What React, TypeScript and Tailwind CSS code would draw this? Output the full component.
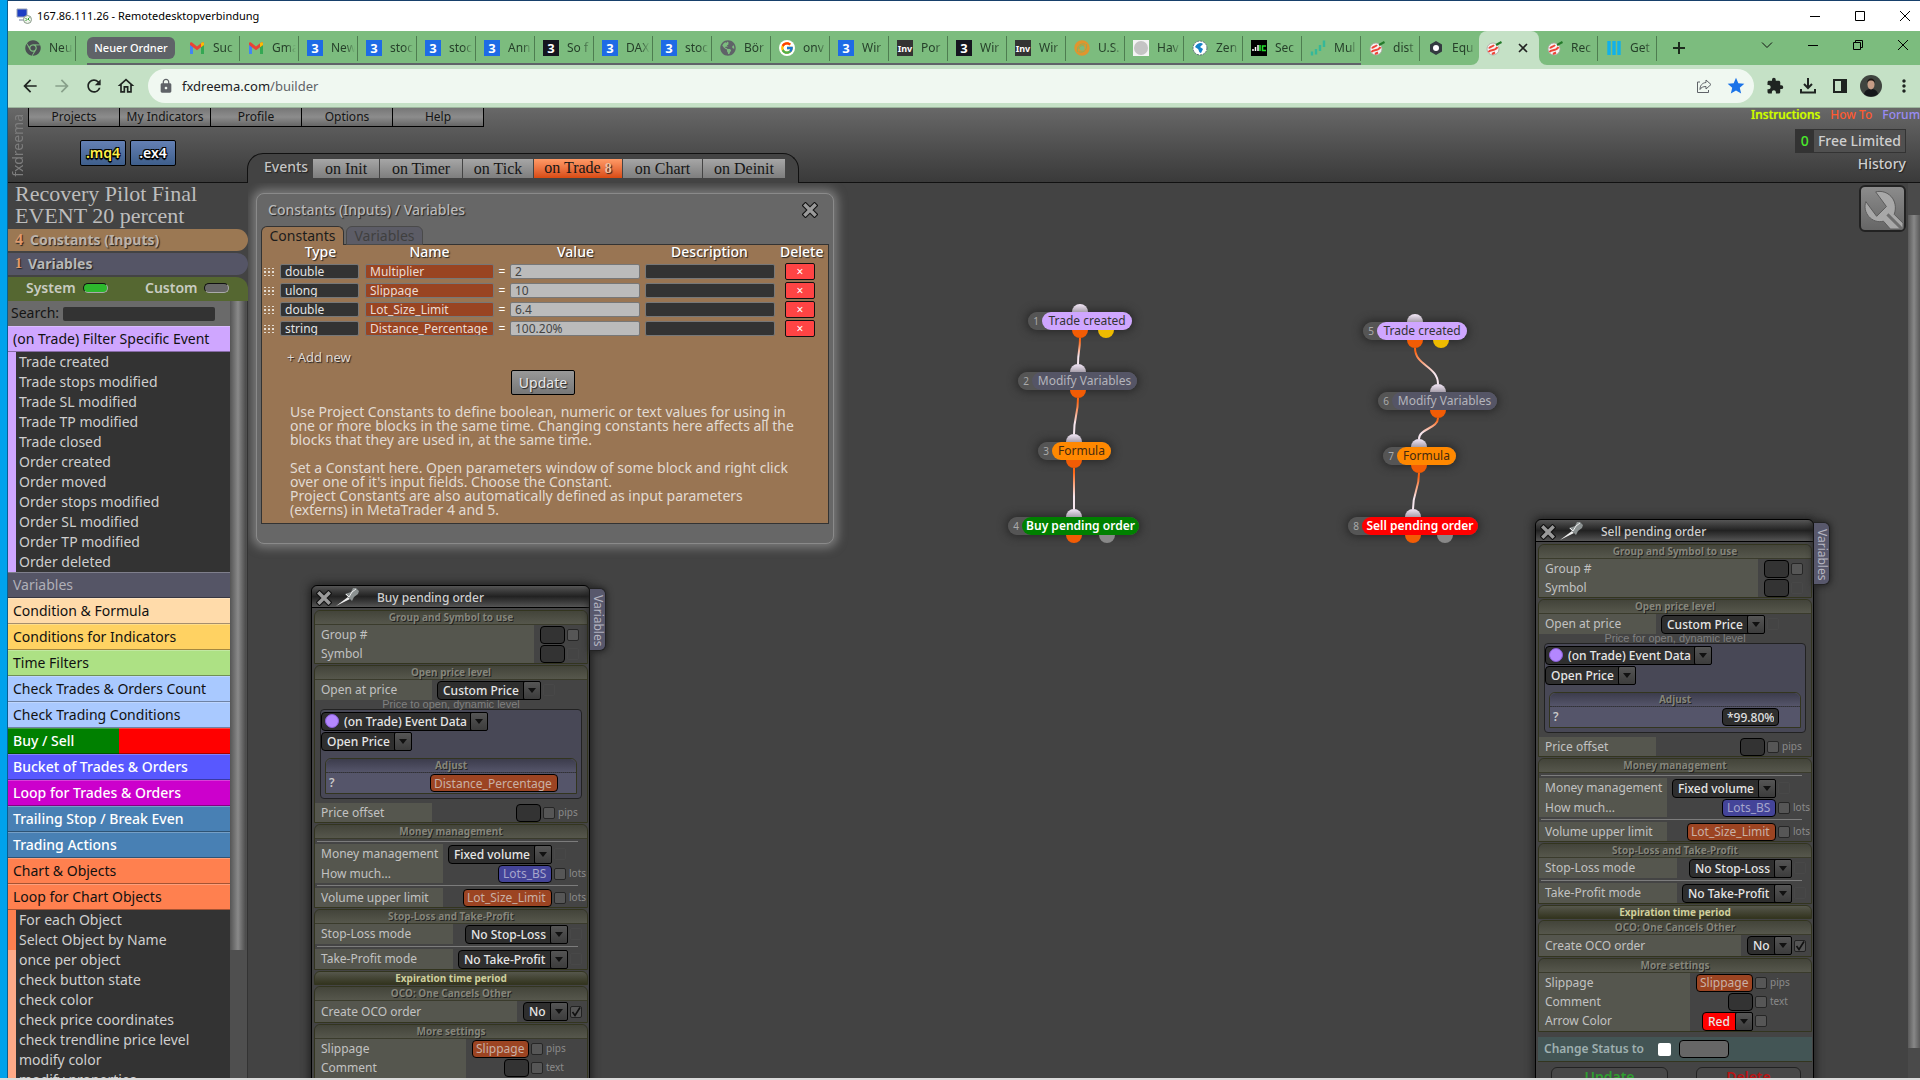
import React from "react";
import clsx from "clsx";
import { FcGoogle } from "react-icons/fc";
import { FaChrome, FaGlobeAmericas } from "react-icons/fa";
import {
  MdArrowBack,
  MdArrowForward,
  MdRefresh,
  MdOutlineHome,
  MdLock,
  MdStar,
  MdExtension,
  MdMoreVert,
} from "react-icons/md";

/* ---------- favicons ---------- */

function ThreeIcon({ dark }: { dark?: boolean }) {
  return (
    <span
      className={clsx(
        "flex size-4 items-center justify-center text-[13px] leading-none font-bold text-white",
        dark ? "bg-[#15151f]" : "bg-[#1e6be6]"
      )}
    >
      3
    </span>
  );
}

function GmailIcon() {
  return (
    <svg viewBox="0 0 16 12" className="h-3 w-4">
      <path d="M1 12V2l3 2.3V12z" fill="#4285f4" />
      <path d="M15 12V2l-3 2.3V12z" fill="#34a853" />
      <path d="M1 1.5C1 .5 2.2 0 3 .6L8 4.4l5-3.8c.8-.6 2-.1 2 .9V3L8 8.2 1 3z" fill="#ea4335" />
      <path d="M12 1.3l1-.7c.8-.6 2-.1 2 .9V3l-3 2.3z" fill="#fbbc04" />
    </svg>
  );
}

function InvIcon() {
  return (
    <span className="flex size-4 items-center justify-center bg-[#333] text-[9px] leading-none font-bold text-white">
      Inv
    </span>
  );
}

function SwirlIcon() {
  return (
    <svg viewBox="0 0 16 16" className="size-4">
      <circle cx="8" cy="8" r="5.2" fill="none" stroke="#e0952e" strokeWidth="5" />
      <path d="M4 12C2 8 5 3 11 4M12 4c2 4-1 9-7 8M5 9c0-3 3-4 5-3" stroke="#8fae5a" fill="none" />
    </svg>
  );
}

function GrayDotIcon() {
  return (
    <svg viewBox="0 0 16 16" className="size-4">
      <path d="M0 0h16v16H0z" fill="#f4f4f4" />
      <circle cx="8" cy="8" r="7" fill="#c4c4c4" />
    </svg>
  );
}

function ZenIcon() {
  return (
    <svg viewBox="0 0 16 16" className="size-4">
      <circle cx="8" cy="8" r="7" fill="#fff" stroke="#5b6f7d" strokeDasharray="2 1" />
      <path d="M3 7c2-4 6-5 8-3l-3 3 3 2-2 4c-2 0-2-3-3-4z" fill="#1583c9" />
    </svg>
  );
}

function ChartIcon() {
  return (
    <svg viewBox="0 0 16 16" className="size-4">
      <path d="M0 0h16v16H0z" fill="#000" />
      <path d="M2 11V9M4.500 11V7M7 11V5" stroke="#fff" strokeWidth="1.500" />
      <path d="M9 11V5M15 6h-3.500v4.500H15" stroke="#22e02a" strokeWidth="1.600" fill="none" />
    </svg>
  );
}

function BarsIcon() {
  return (
    <svg viewBox="0 0 16 16" className="size-4">
      <path d="M2 15.500v-4M6 14.500V9M10 11V5M14 7V.5" stroke="#35b899" strokeWidth="2.400" />
    </svg>
  );
}

function DreemaIcon() {
  return (
    <svg viewBox="0 0 16 16" className="size-4">
      <circle cx="7" cy="9" r="6" fill="#f5f5f5" stroke="#a9a4a0" strokeWidth=".8" />
      <path d="M3 8.500c1-2.500 3-1 5-3.500M2.500 12c2-3 6 0 9-5M6 14l3-1.500" stroke="#ee4438" strokeWidth="2" fill="none" />
      <path d="M10 5l5.500-3" stroke="#237a2a" strokeWidth="2" />
    </svg>
  );
}

function HexIcon() {
  return (
    <svg viewBox="0 0 16 16" className="size-4">
      <path d="M8 1l6 3.500v7L8 15l-6-3.500v-7z" fill="#333a40" />
      <circle cx="8" cy="8" r="3" fill="#fff" />
    </svg>
  );
}

function BlueBarsIcon() {
  return (
    <svg viewBox="0 0 16 16" className="size-4">
      <path d="M3 1v14M8 1v14M13 1v14" stroke="#12b1ea" strokeWidth="3.400" />
    </svg>
  );
}

const globe = <FaGlobeAmericas className="size-4 text-[#5f6368]" />;

const tabs: { icon: React.ReactNode; text: string }[] = [
  { icon: <GmailIcon />, text: "Suc" },
  { icon: <GmailIcon />, text: "Gma" },
  { icon: <ThreeIcon />, text: "New" },
  { icon: <ThreeIcon />, text: "stoc" },
  { icon: <ThreeIcon />, text: "stoc" },
  { icon: <ThreeIcon />, text: "Ann" },
  { icon: <ThreeIcon dark />, text: "So f" },
  { icon: <ThreeIcon />, text: "DAX" },
  { icon: <ThreeIcon />, text: "stoc" },
  { icon: globe, text: "Bör" },
  { icon: <FcGoogle className="size-4 rounded-full bg-white p-px" />, text: "onv" },
  { icon: <ThreeIcon />, text: "Wir" },
  { icon: <InvIcon />, text: "Por" },
  { icon: <ThreeIcon dark />, text: "Wir" },
  { icon: <InvIcon />, text: "Wir" },
  { icon: <SwirlIcon />, text: "U.S." },
  { icon: <GrayDotIcon />, text: "Hav" },
  { icon: <ZenIcon />, text: "Zen" },
  { icon: <ChartIcon />, text: "Sec" },
  { icon: <BarsIcon />, text: "Mul" },
  { icon: <DreemaIcon />, text: "dist" },
  { icon: <HexIcon />, text: "Equ" },
];

const tabsAfter = [
  { icon: <DreemaIcon />, text: "Rec" },
  { icon: <BlueBarsIcon />, text: "Get" },
];

function BrowserTab({ icon, text, last }: { icon: React.ReactNode; text: string; last?: boolean }) {
  return (
    <button
      className={clsx(
        "flex h-[25px] w-[59px] shrink-0 items-center gap-2 border-r pl-2",
        last ? "border-transparent" : "border-[#4e7d50]"
      )}
    >
      <span className="flex w-4 shrink-0 justify-center">{icon}</span>
      <span className="w-6 overflow-hidden mask-r-from-60% text-left text-xs whitespace-nowrap text-[#26402a]">
        {text}
      </span>
    </button>
  );
}

/* ---------- window chrome ---------- */

function WindowButtons({ restore }: { restore?: boolean }) {
  return (
    <div className="flex items-center gap-[33px] pr-[9px] text-black">
      <button aria-label="Minimize">
        <svg viewBox="0 0 12 12" className="size-3" stroke="currentColor">
          <path d="M1 6.500h10" />
        </svg>
      </button>
      <button aria-label="Maximize">
        <svg viewBox="0 0 12 12" className="size-3" stroke="currentColor" fill="none">
          {restore ? <path d="M1.500 3.500h7v7h-7zM3.500 3.500v-2h7v7h-2" /> : <path d="M1.500 1.500h9v9h-9z" />}
        </svg>
      </button>
      <button aria-label="Close">
        <svg viewBox="0 0 12 12" className="size-3" stroke="currentColor">
          <path d="M1 1l10 10M11 1L1 11" />
        </svg>
      </button>
    </div>
  );
}

function TitleBar() {
  return (
    <div className="flex h-[31px] shrink-0 items-center border-t border-[#17406b] bg-white pl-2">
      <svg viewBox="0 0 16 16" className="size-4">
        <path d="M1 1h10v8H1z" fill="#1d3fc4" stroke="#9aa4b5" />
        <path d="M3 11h6v2H3z" fill="#b9c0cc" />
        <circle cx="11.500" cy="11.500" r="4" fill="#eef4ea" stroke="#8a9a8a" />
        <path d="M9.500 10l1.500 1.500L9.500 13M13.500 9.500L12 11l1.500 1.500" stroke="#2c9b2c" fill="none" />
      </svg>
      <span className="ml-[5px] text-[11px] text-black">167.86.111.26 - Remotedesktopverbindung</span>
      <div className="ml-auto">
        <WindowButtons />
      </div>
    </div>
  );
}

function TabStrip() {
  return (
    <div className="flex h-[34px] shrink-0 bg-[#7cbc7e]">
      <div className="flex items-center pl-[9px]">
        <BrowserTab icon={<FaChrome className="size-4 text-[#4a4f52]" />} text="Neu" />
      </div>
      <div className="ml-[11px] flex items-center border-b-2 border-[#5f6368] pt-0.5">
        <button className="mr-1.5 h-[22px] w-[88px] rounded-md bg-[#5f6368] text-[11px] font-medium text-white">
          Neuer Ordner
        </button>
        {tabs.slice(0, 20).map((tab, i) => (
          <BrowserTab key={i} {...tab} />
        ))}
      </div>
      <div className="flex items-center">
        {tabs.slice(20).map((tab, i) => (
          <BrowserTab key={i} {...tab} last={i === 1} />
        ))}
      </div>
      <div className="relative flex w-[60px] shrink-0 items-center gap-4 rounded-t-lg bg-[#c5e1c6] pl-[7px]">
        <svg viewBox="0 0 8 8" className="absolute bottom-0 -left-2 size-2" fill="#c5e1c6">
          <path d="M8 0v8H0a8 8 0 0 0 8-8z" />
        </svg>
        <svg viewBox="0 0 8 8" className="absolute -right-2 bottom-0 size-2" fill="#c5e1c6">
          <path d="M0 0v8h8a8 8 0 0 1-8-8z" />
        </svg>
        <DreemaIcon />
        <button aria-label="Close tab">
          <svg viewBox="0 0 10 10" className="size-2.5" stroke="#222" strokeWidth="1.600">
            <path d="M1 1l8 8M9 1L1 9" />
          </svg>
        </button>
      </div>
      <div className="flex items-center">
        {tabsAfter.map((tab, i) => (
          <BrowserTab key={i} {...tab} />
        ))}
        <button aria-label="New tab" className="ml-[15px]">
          <svg viewBox="0 0 14 14" className="size-3.5" stroke="#1c2b1d" strokeWidth="2">
            <path d="M7 1v12M1 7h12" />
          </svg>
        </button>
      </div>
      <div className="ml-auto flex items-center pr-0.5 pb-1.5">
        <button aria-label="Search tabs" className="mr-[34px]">
          <svg viewBox="0 0 12 12" className="size-3" stroke="#111" fill="none">
            <path d="M1 3.500l5 5 5-5" />
          </svg>
        </button>
        <WindowButtons restore />
      </div>
    </div>
  );
}

function Toolbar() {
  return (
    <div className="flex h-[43px] shrink-0 items-center border-b border-[#9cb59d] bg-[#c5e1c6] pr-1.5 text-[#1f2421]">
      <div className="flex w-[140px] shrink-0 gap-3 pl-3">
        <button aria-label="Back"><MdArrowBack className="size-5" /></button>
        <button aria-label="Forward"><MdArrowForward className="size-5 text-[#88a08a]" /></button>
        <button aria-label="Reload"><MdRefresh className="size-5" /></button>
        <button aria-label="Home"><MdOutlineHome className="size-5" /></button>
      </div>
      <div className="flex h-[34px] flex-1 items-center rounded-full bg-[#f0f8f1] pr-2 pl-2.5">
        <MdLock className="size-4 text-[#5f6368]" />
        <span className="flex-1 pt-0.5 pl-2 text-[13px] text-[#202124]">
          fxdreema.com<span className="text-[#5f6368]">/builder</span>
        </span>
        <button aria-label="Share">
          <svg viewBox="0 0 16 16" className="size-4" stroke="#5f6368" fill="none">
            <path d="M4 4H1.500v10.500h11V12" />
            <path d="M10 2l5 4.500-5 4.500V8.500C7 8.500 5 9.500 4 11.500c0-4 2-6.500 6-7z" />
          </svg>
        </button>
        <button aria-label="Bookmark" className="ml-3.5"><MdStar className="size-5 text-[#1a73e8]" /></button>
      </div>
      <div className="flex items-center">
        <button aria-label="Extensions" className="ml-3"><MdExtension className="size-[18px]" /></button>
        <button aria-label="Downloads" className="ml-4">
          <svg viewBox="0 0 16 16" className="size-4" stroke="currentColor" strokeWidth="2" fill="none">
            <path d="M8 0v9M4 6l4 4 4-4M1 11v3.500h14V11" />
          </svg>
        </button>
        <button aria-label="Side panel" className="ml-4">
          <svg viewBox="0 0 16 16" className="size-4">
            <path d="M2 2h12v12H2z" fill="none" stroke="currentColor" strokeWidth="2" />
            <path d="M9 2h5v12H9z" fill="currentColor" />
          </svg>
        </button>
        <button aria-label="Account" className="ml-3">
          <svg viewBox="0 0 22 22" className="size-[22px]">
            <circle cx="11" cy="11" r="11" fill="#3f443f" />
            <path d="M4 19c1-4 4-5 7-5s6 1 7 5a11 11 0 0 1-14 0z" fill="#15171a" />
            <ellipse cx="11" cy="9.500" rx="3.500" ry="5" fill="#c59c86" />
            <path d="M7 8c0-6 8-6 8 0-1-2-2.500-2.500-4-2.500S8 6 7 8z" fill="#1d1512" />
          </svg>
        </button>
        <button aria-label="Menu" className="ml-3"><MdMoreVert className="size-5" /></button>
      </div>
    </div>
  );
}

/* ---------- builder header ---------- */

const menu = ["Projects", "My Indicators", "Profile", "Options", "Help"];

const events = [
  { name: "on Init", width: "w-[67px]" },
  { name: "on Timer", width: "w-[83px]" },
  { name: "on Tick", width: "w-[71px]" },
  { name: "on Trade", width: "w-[89px]", count: 8 },
  { name: "on Chart", width: "w-[80px]" },
  { name: "on Deinit", width: "w-[83px]" },
];

const outline =
  "[text-shadow:1px_1px_0_#000,-1px_1px_0_#000,1px_-1px_0_#000,-1px_-1px_0_#000,0_2px_1px_#000]";
const textShade = "[text-shadow:1px_1px_1px_#222]";

function Header() {
  return (
    <header className="flex h-[75px] shrink-0 border-b border-[#111] bg-linear-to-b from-[#686868] to-[#3a3a3a]">
      <div className="flex w-5 shrink-0 items-center justify-center">
        <span className="rotate-180 text-sm leading-4 text-[#7d7d7d] [writing-mode:vertical-rl]">fxdreema</span>
      </div>
      <div className="flex flex-col">
        <nav className="flex h-[19px] border-l border-black">
          {menu.map((item) => (
            <button
              key={item}
              className="w-[91px] border-r border-b border-black bg-linear-to-b from-[#777] via-[#8c8c8c] to-[#666] text-xs leading-[18px] text-[#151515]"
            >
              {item}
            </button>
          ))}
        </nav>
        <div className="flex flex-1 items-end">
          <div className="flex w-[219px] shrink-0 gap-1 self-start pt-[13px] pl-[52px]">
            <button
              className={`h-[26px] w-[46px] rounded-xs border border-black bg-linear-to-b from-[#6480b4] to-[#3f5f8c] text-sm leading-6 font-semibold text-[#fff04a] ${outline}`}
            >
              .mq4
            </button>
            <button
              className={`h-[26px] w-[46px] rounded-xs border border-black bg-linear-to-b from-[#6480b4] to-[#3f5f8c] text-sm leading-6 font-semibold text-white ${outline}`}
            >
              .ex4
            </button>
          </div>
          <div className="-mb-px flex h-[30px] items-start rounded-t-2xl border border-b-0 border-[#111] bg-[#434343] pt-[5px] pr-3 pl-4">
            <span className={`w-[49px] text-sm leading-[15px] font-medium text-[#c4c4c4] ${textShade}`}>Events</span>
            <div className="flex">
              {events.map((e) => (
                <button
                  key={e.name}
                  className={clsx(
                    "h-[19px] border-r border-[#444] font-['Liberation_Serif',serif] text-base leading-[18px] text-[#161616]",
                    e.width,
                    e.count
                      ? "bg-linear-to-b from-[#ff9a66] to-[#d84a10]"
                      : "bg-linear-to-b from-[#a6a6a6] to-[#7e7e7e]"
                  )}
                >
                  {e.name}
                  {e.count && <span className={`pl-1 text-sm font-bold text-[#f0c0a0] ${textShade}`}>{e.count}</span>}
                </button>
              ))}
            </div>
          </div>
        </div>
      </div>
      <div className="ml-auto flex flex-col items-end pr-3.5">
        <div className="-mr-3.5 flex gap-2.5 text-xs leading-[14px] font-medium">
          <a href="#instructions" className="text-[#ccff00] [text-shadow:0_0_1px_#ccff00]">Instructions</a>
          <a href="#howto" className="text-[#ff5a30]">How To</a>
          <a href="#forum" className="text-[#9a8cf5]">Forum</a>
        </div>
        <a
          href="#account"
          className="mt-[7px] flex h-6 items-center border border-[#333] bg-[#505050] text-sm leading-[22px] font-medium text-[#cfcfcf]"
        >
          <span className="w-[18px] bg-[#333] text-center text-[#4ae82c]">0</span>
          <span className="px-1">Free Limited</span>
        </a>
        <a href="#history" className={`mt-0.5 text-sm leading-[18px] font-medium text-[#cfcfcf] ${textShade}`}>
          History
        </a>
      </div>
    </header>
  );
}

/* ---------- sidebar ---------- */

const tradeEvents = [
  "Trade created",
  "Trade stops modified",
  "Trade SL modified",
  "Trade TP modified",
  "Trade closed",
  "Order created",
  "Order moved",
  "Order stops modified",
  "Order SL modified",
  "Order TP modified",
  "Order deleted",
];

const categories = [
  { name: "Variables", style: "bg-[#555566] text-[#b0b0b8]" },
  { name: "Condition & Formula", style: "bg-[#ffdbaa] text-[#111]" },
  { name: "Conditions for Indicators", style: "bg-[#ffd262] text-[#111]" },
  { name: "Time Filters", style: "bg-[#ade184] text-[#111]" },
  { name: "Check Trades & Orders Count", style: "bg-[#a9c9ff] text-[#111]" },
  { name: "Check Trading Conditions", style: "bg-[#a9c9ff] text-[#111]" },
  { name: "Buy / Sell", style: "bg-linear-to-r from-[#008000] from-50% to-[#ff0000] to-50% font-medium text-white" },
  { name: "Bucket of Trades & Orders", style: "bg-[#5858ff] font-medium text-white" },
  { name: "Loop for Trades & Orders", style: "bg-[#cc00cc] font-medium text-white" },
  { name: "Trailing Stop / Break Even", style: "bg-[#4880b4] font-medium text-white" },
  { name: "Trading Actions", style: "bg-[#4880b4] font-medium text-white" },
  { name: "Chart & Objects", style: "bg-[#ff804f] text-[#111]" },
  { name: "Loop for Chart Objects", style: "bg-[#ff804f] text-[#111]" },
];

const chartItems = [
  "once per object",
  "check button state",
  "check color",
  "check price coordinates",
  "check trendline price level",
  "modify color",
  "modify properties",
];

function Category({ name, style }: { name: string; style: string }) {
  return (
    <button
      className={`block h-[26px] w-full border-y border-t-white/25 border-b-black/35 pb-px pl-[5px] text-left text-sm leading-[21px] ${style}`}
    >
      {name}
    </button>
  );
}

function BlockList({ items, stripe }: { items: string[]; stripe: string }) {
  return (
    <ul className={`border-l-8 bg-[#333] pl-[3px] text-sm text-[#cfcfcf] ${stripe}`}>
      {items.map((item) => (
        <li key={item} className="leading-5">
          {item}
        </li>
      ))}
    </ul>
  );
}

function Led({ on }: { on?: boolean }) {
  return (
    <span
      className={clsx(
        "h-2.5 w-[25px] rounded-md border border-t-[#111] border-r-[#aaa] border-b-[#aaa] border-l-[#111]",
        on ? "bg-[#2db82d]" : "bg-[#666]"
      )}
    />
  );
}

function Sidebar() {
  return (
    <aside className="flex w-60 shrink-0 flex-col overflow-hidden">
      <h1 className="h-[46px] pl-[7px] font-['Liberation_Serif',serif] text-[22px] leading-[22px] text-[#bdbdbd]">
        Recovery Pilot Final
        <br />
        EVENT 20 percent
      </h1>
      <button className={`flex h-[22px] shrink-0 items-center rounded-r-full bg-[#9b7853] pl-[7px] text-sm font-bold text-[#bcb3aa] ${textShade}`}>
        <span className="w-[15px] text-left font-['Liberation_Serif',serif] text-base text-[#e09a6c]">4</span>
        Constants (Inputs)
      </button>
      <button className={`mt-0.5 flex h-[22px] shrink-0 items-center rounded-r-full bg-[#555566] pl-[7px] text-sm font-bold text-[#b8b8b8] ${textShade}`}>
        <span className="w-[13px] text-left font-['Liberation_Serif',serif] text-sm text-[#e09a6c]">1</span>
        Variables
      </button>
      <div className={`mt-0.5 flex h-6 shrink-0 items-center rounded-tr-xl bg-[#556731] pb-0.5 pl-[18px] text-sm font-semibold text-[#c9ccc2] ${textShade}`}>
        <button className="flex w-[119px] items-center gap-[7px]">
          System <Led on />
        </button>
        <button className="flex items-center gap-1.5">
          Custom <Led />
        </button>
      </div>
      <div className="flex min-h-0 flex-1">
        <div className="w-[222px] overflow-hidden">
          <label className="flex h-[25px] items-center gap-1 bg-[#6a6a6a] pb-0.5 pl-[3px] text-sm text-[#151515]">
            Search:
            <input className="mt-0.5 h-3.5 w-[152px] rounded-xs bg-[#333]" />
          </label>
          <Category name="(on Trade) Filter Specific Event" style="bg-[#cfa6ff] text-[#111]" />
          <BlockList items={tradeEvents} stripe="border-[#cfa6ff]" />
          {categories.map((c) => (
            <Category key={c.name} {...c} />
          ))}
          <BlockList items={["For each Object", "Select Object by Name"]} stripe="border-[#ff804f]" />
          <BlockList items={chartItems} stripe="border-[#ffaa88]" />
        </div>
        <div className="w-[18px] border-r border-[#333] bg-[#4f4f4f]">
          <div className="h-[649px] w-4 bg-linear-to-r from-[#555] via-[#8a8a8a] to-[#4a4a4a]" />
        </div>
      </div>
    </aside>
  );
}

/* ---------- constants window ---------- */

const constants = [
  { type: "double", name: "Multiplier", value: "2" },
  { type: "ulong", name: "Slippage", value: "10" },
  { type: "double", name: "Lot_Size_Limit", value: "6.4" },
  { type: "string", name: "Distance_Percentage", value: "100.20%" },
];

function CrossIcon() {
  return (
    <svg viewBox="0 0 16 16" className="size-4">
      <path d="M3.500 3.500l9 9M12.500 3.500l-9 9" stroke="#111" strokeWidth="5.600" strokeLinecap="square" />
      <path d="M3.500 3.500l9 9M12.500 3.500l-9 9" stroke="#9a9a9a" strokeWidth="3.400" strokeLinecap="square" />
    </svg>
  );
}

function ConstantsWindow() {
  const field = "block h-[15px] w-full rounded-xs border border-[#777] px-1 text-xs leading-[13px]";
  return (
    <section className="absolute top-[10px] left-2 w-[578px] rounded-lg border border-[#8a8a8a] bg-[#676767] px-1 pb-[19px] shadow-[0_0_10px_4px_#7a7a7a]">
      <div className="flex h-8 items-center justify-between pr-[11px] pb-px pl-[7px]">
        <h2 className={`text-sm font-medium text-[#bababa] ${textShade}`}>Constants (Inputs) / Variables</h2>
        <button aria-label="Close">
          <CrossIcon />
        </button>
      </div>
      <div className="-mb-px flex gap-0.5 text-sm leading-[18px]">
        <button className="relative h-[19px] w-[83px] rounded-t-md border border-b-0 border-[#333] bg-[#997553] text-[#1c1c1c]">
          Constants
        </button>
        <button className="h-[19px] w-[77px] rounded-t-md border border-[#4a4a4a] bg-[#5c5c66] text-[#404040]">
          Variables
        </button>
      </div>
      <div className="h-[280px] border border-[#333] bg-[#997553]">
        <table className="w-full table-fixed border-collapse">
          <colgroup>
            <col className="w-[18px]" />
            <col className="w-[85px]" />
            <col className="w-[129px]" />
            <col className="w-4" />
            <col className="w-[135px]" />
            <col className="w-[135px]" />
            <col />
          </colgroup>
          <thead>
            <tr className={`h-[17px] text-sm leading-[14px] text-white ${textShade}`}>
              <th />
              <th className="pr-1 pb-[3px] font-medium">Type</th>
              <th className="pb-[3px] font-medium">Name</th>
              <th />
              <th className="pr-1 pb-[3px] font-medium">Value</th>
              <th className="pr-1.5 pb-[3px] font-medium">Description</th>
              <th className="pr-2 pb-[3px] font-medium">Delete</th>
            </tr>
          </thead>
          <tbody>
            {constants.map((c) => (
              <tr key={c.name} className="h-[19px]">
                <td className="pl-0.5">
                  <svg viewBox="0 0 10 8" className="h-2 w-2.5" fill="#e4dcd2">
                    <path d="M0 0h2v1H0zM4 0h2v1H4zM8 0h2v1H8zM0 3h2v2H0zM4 3h2v2H4zM8 3h2v2H8zM0 7h2v1H0zM4 7h2v1H4zM8 7h2v1H8z" />
                  </svg>
                </td>
                <td className="pr-1.5">
                  <input aria-label="Type" defaultValue={c.type} className={`${field} bg-[#333] text-[#e4e4e4]`} />
                </td>
                <td>
                  <input aria-label="Name" defaultValue={c.name} className={`${field} bg-[#994422] text-[#ecdcd4]`} />
                </td>
                <td className="text-center text-xs leading-none text-white">=</td>
                <td className="pr-[5px]">
                  <input aria-label="Value" defaultValue={c.value} className={`${field} bg-[#bbb] text-[#444]`} />
                </td>
                <td className="pr-[5px]">
                  <input aria-label="Description" className={`${field} bg-[#333]`} />
                </td>
                <td className="pr-2">
                  <button
                    aria-label="Delete constant"
                    className="mx-auto block h-[17px] w-[30px] rounded-xs border border-[#111] bg-[#ff4444] text-xs leading-[13px] text-white"
                  >
                    ×
                  </button>
                </td>
              </tr>
            ))}
          </tbody>
        </table>
        <div className="pt-[9px] pr-8 pl-7 text-sm leading-[14px] text-[#e2dbd3]">
          <button className={`-ml-[3px] block h-5 text-[13px] ${textShade}`}>+ Add new</button>
          <button
            className={`mx-auto mt-[3px] block h-[25px] w-16 rounded-xs border border-black bg-linear-to-b from-[#999] to-[#777] text-sm text-[#e8e8e8] ${textShade}`}
          >
            Update
          </button>
          <p className="mt-2.5">
            Use Project Constants to define boolean, numeric or text values for using in one or more blocks in the same
            time. Changing constants here affects all the blocks that they are used in, at the same time.
          </p>
          <p className="mt-3.5">
            Set a Constant here. Open parameters window of some block and right click over one of it's input fields.
            Choose the Constant.
            <br />
            Project Constants are also automatically defined as input parameters
            <br />
            (externs) in MetaTrader 4 and 5.
          </p>
        </div>
      </div>
    </section>
  );
}

/* ---------- block parameters window ---------- */

const boxField = "h-[18px] rounded-sm border border-black";
const barText = "text-center text-[10px] leading-[13px] font-bold text-[#85857a] [text-shadow:1px_1px_0_#222]";

function Drop({ value, width, style = "bg-[#2e2e2e]", dot }: { value: string; width: string; style?: string; dot?: boolean }) {
  return (
    <span className={`relative flex h-[19px] ${width}`}>
      <select
        aria-label={value}
        className={clsx(
          "h-full w-full appearance-none rounded-sm border border-black text-xs leading-[15px] font-medium text-[#e6e6e6]",
          dot ? "pl-[22px]" : "pl-[5px]",
          style
        )}
      >
        <option>{value}</option>
      </select>
      {dot && <span className="absolute top-0.5 left-1 size-3.5 rounded-full border border-[#8a60d8] bg-[#b487ff]" />}
      <span className="pointer-events-none absolute inset-y-0 right-0 flex w-[18px] items-center justify-center rounded-xs border border-black bg-linear-to-b from-[#555] to-[#3c3c3c]">
        <svg viewBox="0 0 8 5" className="h-[5px] w-2" fill="#111">
          <path d="M0 0h8L4 5z" />
        </svg>
      </span>
    </span>
  );
}

function Tick({ mode = "on", label }: { mode?: "on" | "faint" | "checked"; label: string }) {
  return (
    <span className="relative ml-0.5 flex">
      <input
        type="checkbox"
        aria-label={label}
        defaultChecked={mode === "checked"}
        className={clsx(
          "size-3 appearance-none rounded-xs border",
          mode === "on" && "border-[#262626] bg-[#565656]",
          mode === "faint" && "border-[#484848] bg-transparent",
          mode === "checked" && "border-[#222] bg-[#555]"
        )}
      />
      {mode === "checked" && (
        <svg viewBox="0 0 12 12" className="pointer-events-none absolute inset-0 size-3" stroke="#111" strokeWidth="1.600" fill="none">
          <path d="M2.500 6l2.500 3.500L10 1.500" />
        </svg>
      )}
    </span>
  );
}

function Section({ title, children }: { title: string; children: React.ReactNode }) {
  return (
    <section className="mb-px rounded-t-md border border-[#33351f]">
      <h4 className={`h-3.5 rounded-t-md border-b border-[#3a3b2c] bg-linear-to-b from-[#43443a] to-[#56574c] ${barText}`}>
        {title}
      </h4>
      {children}
    </section>
  );
}

type RowProps = {
  label: string;
  labelW: string;
  unitW: string;
  unit?: string;
  tick?: "on" | "faint" | "checked";
  height?: string;
  children: React.ReactNode;
};

function Row({ label, labelW, unitW, unit, tick = "on", height = "h-[19px]", children }: RowProps) {
  return (
    <div className={`flex ${height} items-stretch`}>
      <span className={`${labelW} flex shrink-0 items-center bg-[#55564e] pl-1.5 text-xs text-[#c2c2c2]`}>{label}</span>
      <span className="flex flex-1 items-center justify-end">
        {children}
        <Tick label={label} mode={tick} />
        <span className={`${unitW} shrink-0 pl-[3px] text-[10px] text-[#8a8a8a]`}>{unit}</span>
      </span>
    </div>
  );
}

function Rule() {
  return <hr className="mt-0.5 mr-[9px] mb-0.5 ml-0.5 border-[#7c7c7c]" />;
}

type BlockProps = {
  title: string;
  priceNote: string;
  adjust: React.ReactNode;
  arrow: { name: string; style: string };
  place: string;
};

function BlockWindow({ title, priceNote, adjust, arrow, place }: BlockProps) {
  const constant = `${boxField} bg-[#9c4422] px-[3px] text-xs text-[#c9b1a6]`;
  return (
    <section className={`absolute flex items-start ${place}`}>
      <div className="w-[279px] rounded-t-md border border-black bg-[#444] pb-2 shadow-[0_0_8px_2px_#222]">
        <div className="flex h-[22px] items-center rounded-t-md border-b border-black bg-linear-to-b from-[#555] via-[#222] to-[#555] pl-1">
          <button aria-label="Close" className="mt-0.5"><CrossIcon /></button>
          <button aria-label="Pin" className="ml-1">
            <svg viewBox="0 0 24 18" className="h-[18px] w-6">
              <path d="M0 18L12 9l2 2z" fill="#eee" />
              <path d="M9 6l7 7 2-4 4-3 1-3-3-3-3 0-2 4z" fill="#8c9292" />
              <path d="M10 6l3 3 3-5 4-3" stroke="#eee" fill="none" />
            </svg>
          </button>
          <h3 className="mt-0.5 ml-[17px] text-xs font-medium text-[#cfcfcf]">{title}</h3>
        </div>
        <div className="pt-0.5 pr-px pl-0.5">
          <Section title="Group and Symbol to use">
            <Row label="Group #" labelW="w-[219px]" unitW="w-2">
              <input aria-label="Group" className={`${boxField} w-[25px] bg-[#333]`} />
            </Row>
            <Row label="Symbol" labelW="w-[219px]" unitW="w-2" tick="faint">
              <input aria-label="Symbol" className={`${boxField} w-[25px] bg-[#333]`} />
            </Row>
          </Section>
          <Section title="Open price level">
            <Row label="Open at price" labelW="w-[117px]" unitW="w-8" tick="faint" height="h-5">
              <Drop value="Custom Price" width="w-[104px]" />
            </Row>
            <p className="text-center font-['Liberation_Sans',sans-serif] text-[11px] leading-[9px] text-[#808080]">{priceNote}</p>
            <div className="mr-[5px] ml-[5px] rounded-sm border border-[#222] bg-[#484856] pt-0.5 pb-1">
              <Drop value="(on Trade) Event Data" width="w-[167px]" dot />
              <div className="mt-px">
                <Drop value="Open Price" width="w-[91px]" />
              </div>
              <div className="mx-1 mt-[7px] rounded-t-md border border-[#33351f] bg-[#55556a]">
                <h5 className={`h-3.5 rounded-t-md border-b border-dotted border-[#333] bg-linear-to-b from-[#3c3c4c] to-[#55556a] ${barText}`}>
                  Adjust
                </h5>
                <div className="flex h-5 items-center pl-[3px] text-xs font-semibold text-[#c8c8c8]">
                  <span className="flex-1">?</span>
                  {adjust}
                </div>
              </div>
            </div>
            <div className="pt-1">
              <Row label="Price offset" labelW="w-[117px]" unitW="w-8" unit="pips">
                <input aria-label="Price offset" className={`${boxField} w-[25px] bg-[#333]`} />
              </Row>
            </div>
          </Section>
          <Section title="Money management">
            <Rule />
            <Row label="Money management" labelW="w-[128px]" unitW="w-[21px]" tick="faint" height="h-5">
              <Drop value="Fixed volume" width="w-[104px]" />
            </Row>
            <Row label="How much..." labelW="w-[128px]" unitW="w-[21px]" unit="lots">
              <input
                aria-label="How much"
                defaultValue="Lots_BS"
                className={`${boxField} w-[54px] bg-[#444499] px-1 text-xs text-[#a6a6cc]`}
              />
            </Row>
            <Rule />
            <Row label="Volume upper limit" labelW="w-[128px]" unitW="w-[21px]" unit="lots">
              <input aria-label="Volume upper limit" defaultValue="Lot_Size_Limit" className={`${constant} w-[89px]`} />
            </Row>
          </Section>
          <Section title="Stop-Loss and Take-Profit">
            <Row label="Stop-Loss mode" labelW="w-[138px]" unitW="w-[5px]" tick="faint" height="h-5">
              <Drop value="No Stop-Loss" width="w-[103px]" />
            </Row>
            <Rule />
            <Row label="Take-Profit mode" labelW="w-[138px]" unitW="w-[5px]" tick="faint" height="h-5">
              <Drop value="No Take-Profit" width="w-[110px]" />
            </Row>
          </Section>
          <button className="mb-px block h-3.5 w-full rounded-t-md border border-[#33351f] bg-linear-to-b from-[#56574c] to-[#33341f] text-center text-[10px] leading-3 font-bold text-[#cfcf9c]">
            Expiration time period
          </button>
          <Section title="OCO: One Cancels Other">
            <Row label="Create OCO order" labelW="w-[202px]" unitW="w-[5px]" tick="checked" height="h-[21px]">
              <Drop value="No" width="w-[45px]" />
            </Row>
          </Section>
          <Section title="More settings">
            <Row label="Slippage" labelW="w-[151px]" unitW="w-11" unit="pips">
              <input aria-label="Slippage" defaultValue="Slippage" className={`${constant} w-[57px]`} />
            </Row>
            <Row label="Comment" labelW="w-[151px]" unitW="w-11" unit="text">
              <input aria-label="Comment" className={`${boxField} w-[25px] bg-[#333]`} />
            </Row>
            <Row label="Arrow Color" labelW="w-[151px]" unitW="w-11" height="h-5">
              <Drop value={arrow.name} width="w-[51px]" style={arrow.style} />
            </Row>
          </Section>
          <label className="mt-[5px] flex h-[25px] items-center border-b border-[#33351f] bg-[#435555] pl-1.5 text-xs font-semibold text-[#9fb0b0]">
            <span className="w-[114px]">Change Status to</span>
            <input type="checkbox" className="size-[13px] appearance-none rounded-xs bg-white" />
            <input aria-label="Status" className="ml-2 h-[18px] w-[50px] rounded-sm border border-black bg-[#666]" />
          </label>
          <div className="mt-[5px] flex justify-between pr-[11px] pl-[13px] text-sm leading-4 font-semibold">
            <button className="h-5 w-[117px] rounded-md border border-[#222] bg-[#484848] text-[#2f9e2f]">Update</button>
            <button className="h-5 w-[105px] rounded-md border border-[#222] bg-[#484848] text-[#b81414]">Delete</button>
          </div>
        </div>
      </div>
      <button className="mt-[3px] h-[63px] w-4 rounded-r-md border border-l-0 border-[#222] bg-[#58586c] pt-0.5 text-xs leading-[14px] text-[#b4b4c0] shadow-[0_0_6px_1px_#222] [writing-mode:vertical-rl]">
        Variables
      </button>
    </section>
  );
}

/* ---------- flow chart ---------- */

type FlowNode = {
  id: number;
  text: string;
  x: number;
  y: number;
  w: number;
  port: number;
  second?: { x: number; color: string };
  style: string;
};

// x and y are the pill's top left corner, port is the centre of its sockets
const nodes: FlowNode[] = [
  { id: 1, text: "Trade created", x: 780, y: 129, w: 104, port: 832, second: { x: 858, color: "#eebb00" }, style: "bg-[#cfa6ff] text-[#333]" },
  { id: 2, text: "Modify Variables", x: 770, y: 189, w: 119, port: 830, style: "bg-[#555566] text-[#b4b4bb]" },
  { id: 3, text: "Formula", x: 790, y: 259, w: 73, port: 826, style: "bg-[#ff8800] text-[#442a10]" },
  { id: 4, text: "Buy pending order", x: 760, y: 334, w: 131, port: 826, second: { x: 859, color: "#888888" }, style: "bg-[#008000] font-semibold text-white" },
  { id: 5, text: "Trade created", x: 1115, y: 139, w: 104, port: 1167, second: { x: 1193, color: "#eebb00" }, style: "bg-[#cfa6ff] text-[#333]" },
  { id: 6, text: "Modify Variables", x: 1130, y: 209, w: 119, port: 1190, style: "bg-[#555566] text-[#b4b4bb]" },
  { id: 7, text: "Formula", x: 1135, y: 264, w: 73, port: 1171, style: "bg-[#ff8800] text-[#442a10]" },
  { id: 8, text: "Sell pending order", x: 1100, y: 334, w: 130, port: 1165, second: { x: 1197, color: "#888888" }, style: "bg-[#ff0000] font-semibold text-white" },
];

const links = [
  [1, 2],
  [2, 3],
  [3, 4],
  [5, 6],
  [6, 7],
  [7, 8],
];

function FlowChart() {
  return (
    <>
      {nodes.map((n) => (
        <div
          key={n.id}
          className="absolute h-[18px] rounded-full shadow-[0_0_8px_2px_#2a2a2a]"
          style={{ left: n.x, top: n.y, width: n.w }}
        />
      ))}
      <svg className="absolute inset-0 size-full" fill="none">
        <defs>
          <linearGradient id="socket" x2="0" y2="1">
            <stop offset="0" stopColor="#f4e8f8" />
            <stop offset="0.500" stopColor="#a79fab" />
          </linearGradient>
        </defs>
        {links.map(([from, to]) => {
          const a = nodes[from - 1];
          const b = nodes[to - 1];
          const y1 = a.y + 26;
          const y2 = b.y - 8;
          const mid = (y1 + y2) / 2;
          return (
            <g key={from}>
              <linearGradient id={`link${from}`} gradientUnits="userSpaceOnUse" x1="0" x2="0" y1={y1} y2={y2}>
                <stop offset="0.100" stopColor="#ff6614" />
                <stop offset="0.700" stopColor="#f6e6ee" />
              </linearGradient>
              <path
                d={`M${a.port} ${y1}C${a.port} ${mid} ${b.port} ${mid} ${b.port} ${y2}`}
                stroke={`url(#link${from})`}
                strokeWidth="2"
              />
            </g>
          );
        })}
        {nodes.map((n) => (
          <g key={n.id}>
            <circle cx={n.port} cy={n.y} r="8" fill="url(#socket)" />
            <circle cx={n.port} cy={n.y + 18} r="8" fill="#f25c05" />
            {n.second && <circle cx={n.second.x} cy={n.y + 18} r="8" fill={n.second.color} />}
          </g>
        ))}
      </svg>
      {nodes.map((n) => (
        <div
          key={n.id}
          className="absolute flex h-[18px] rounded-full bg-[#555]"
          style={{ left: n.x, top: n.y, width: n.w }}
        >
          <span className="w-3.5 pl-0.5 text-center text-[10px] leading-[18px] text-[#aaa]">{n.id}</span>
          <span className={`flex-1 rounded-full text-center text-xs leading-[17px] whitespace-nowrap ${n.style}`}>{n.text}</span>
        </div>
      ))}
    </>
  );
}

function Canvas() {
  return (
    <main className="relative min-w-0 flex-1 overflow-hidden">
      <FlowChart />
      <ConstantsWindow />
      <BlockWindow
        place="left-[63px] top-[402px]"
        title="Buy pending order"
        priceNote="Price to open, dynamic level"
        adjust={
          <input
            aria-label="Adjust"
            defaultValue="Distance_Percentage"
            className={`${boxField} mr-[18px] w-[128px] bg-[#9c4422] px-[3px] text-xs font-normal text-[#c9b1a6]`}
          />
        }
        arrow={{ name: "Blue", style: "bg-[#0000ff]" }}
      />
      <BlockWindow
        place="left-[1287px] top-[336px]"
        title="Sell pending order"
        priceNote="Price for open, dynamic level"
        adjust={
          <input
            aria-label="Adjust"
            defaultValue="*99.80%"
            className={`${boxField} mr-[21px] w-[57px] bg-[#2e2e2e] px-1 text-xs font-medium text-[#e0e0e0]`}
          />
        }
        arrow={{ name: "Red", style: "bg-[#ff0000]" }}
      />
      <button
        aria-label="Settings"
        className="absolute top-0.5 right-0.5 flex h-[47px] w-[47px] items-center justify-center rounded-md border-2 border-[#222] bg-linear-to-b from-[#8c8c8c] to-[#666]"
      >
        <svg viewBox="0 0 44 44" className="size-[43px]">
          <path
            d="M5 15l11 15 10-10L15 5c12-3 24 8 19 23l9 9v6H30l-7-8C11 38 1 26 5 15z"
            fill="#a8a8a8"
            stroke="#5a5a5a"
          />
          <path d="M27 28l15 15" stroke="#6e6e6e" strokeWidth="3" />
        </svg>
      </button>
    </main>
  );
}

export default function App() {
  return (
    <div className="flex h-screen overflow-hidden bg-[#dcdcdc] pb-0.5 font-['Noto_Sans',sans-serif]">
      <div className="w-2 shrink-0 border-r border-[#0b5f8f] bg-[#00a2ec]" />
      <div className="flex min-w-0 flex-1 flex-col bg-[#434343]">
        <TitleBar />
        <TabStrip />
        <Toolbar />
        <Header />
        <div className="flex min-h-0 flex-1">
          <Sidebar />
          <Canvas />
          <div className="w-3 shrink-0 bg-[#4a4a4a] pt-8 pb-[30px]">
            <div className="h-full bg-linear-to-r from-[#5a5a5a] via-[#888] to-[#5a5a5a]" />
          </div>
        </div>
      </div>
    </div>
  );
}
